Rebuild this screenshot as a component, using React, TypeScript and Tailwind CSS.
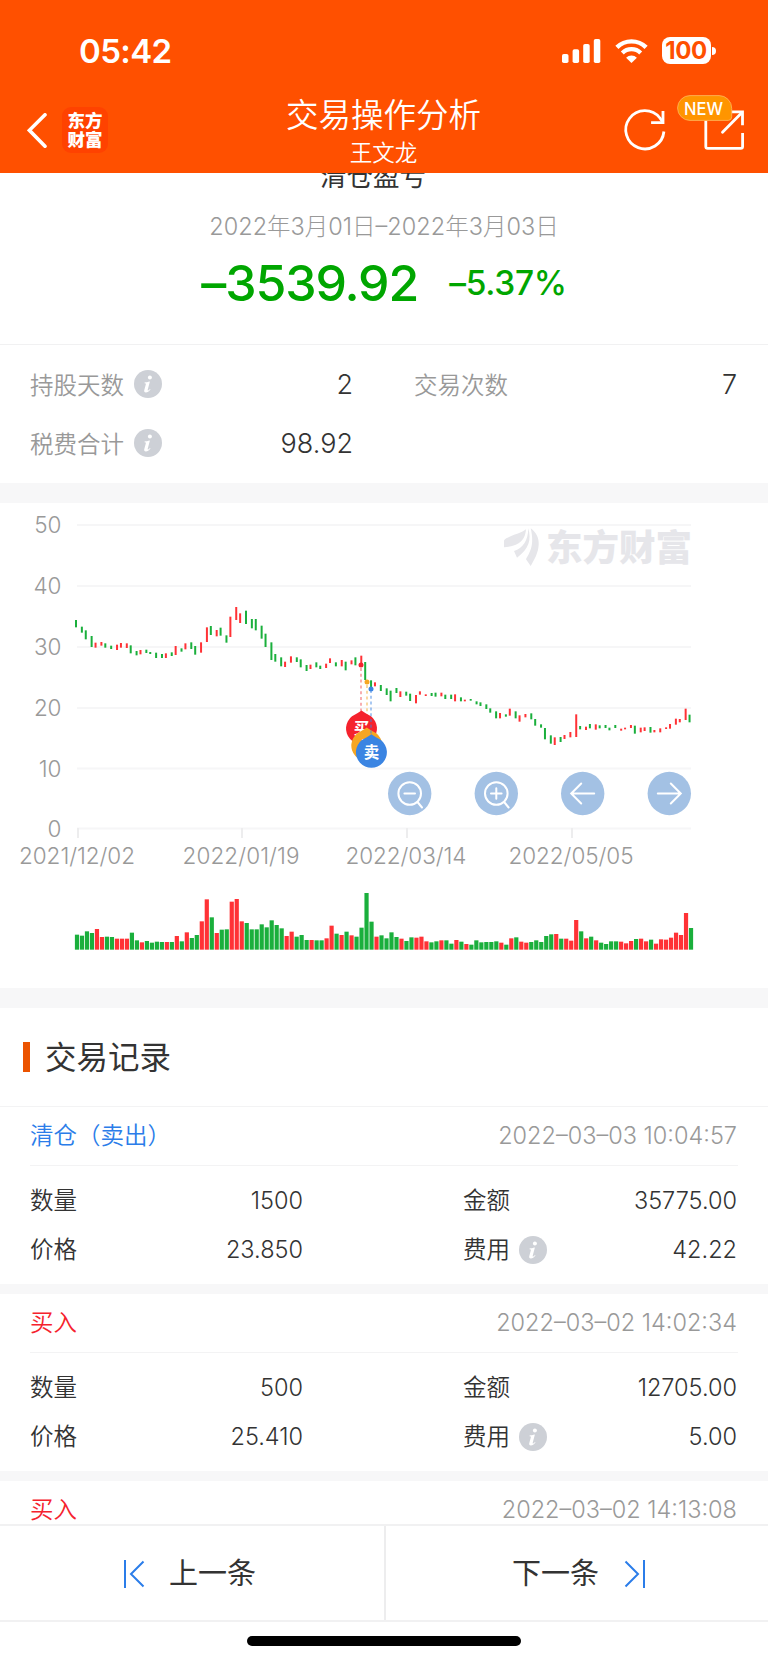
import clsx from "clsx";
import type { PropsWithChildren } from "react";
import React from "react";

type Kind = "r" | "g" | "x";

// [high, low, volume top, kind], in thirds of a pixel inside the chart.
// "x" closed up while its volume bar is drawn as a falling day.
const days: [number, number, number, Kind][] = [
  [360, 382, 194, "g"], [380, 398, 197, "g"], [391, 418, 184, "g"], [408, 441, 189, "g"],
  [428, 443, 177, "r"], [426, 437, 201, "r"], [430, 443, 200, "g"], [437, 447, 201, "g"],
  [434, 450, 206, "r"], [429, 443, 206, "r"], [430, 444, 206, "r"], [436, 460, 188, "g"],
  [453, 466, 211, "g"], [450, 463, 217, "r"], [449, 459, 213, "g"], [456, 462, 218, "g"],
  [458, 474, 215, "g"], [462, 474, 216, "g"], [460, 474, 216, "r"], [457, 468, 216, "g"],
  [438, 465, 198, "r"], [445, 455, 214, "g"], [430, 448, 187, "r"], [427, 447, 204, "g"],
  [438, 464, 195, "g"], [427, 458, 154, "r"], [382, 426, 88, "r"], [378, 405, 142, "g"],
  [390, 409, 189, "r"], [383, 407, 179, "g"], [406, 428, 178, "g"], [350, 411, 95, "r"],
  [321, 360, 87, "r"], [340, 369, 154, "r"], [332, 372, 159, "g"], [357, 385, 178, "g"],
  [357, 391, 178, "g"], [377, 416, 163, "g"], [401, 441, 172, "g"], [427, 480, 151, "g"],
  [462, 485, 165, "g"], [472, 499, 175, "g"], [485, 501, 198, "r"], [469, 488, 185, "r"],
  [472, 486, 200, "g"], [478, 502, 195, "g"], [495, 513, 210, "g"], [494, 507, 210, "r"],
  [487, 502, 211, "g"], [497, 507, 211, "g"], [491, 504, 205, "r"], [475, 489, 167, "r"],
  [487, 499, 191, "g"], [480, 499, 195, "r"], [485, 511, 185, "g"], [481, 493, 196, "r"],
  [472, 496, 200, "g"], [467, 497, 173, "x"], [486, 540, 69, "g"], [541, 567, 155, "g"],
  [547, 559, 200, "r"], [555, 573, 196, "g"], [565, 585, 205, "g"], [572, 604, 187, "g"],
  [564, 579, 201, "g"], [574, 591, 206, "r"], [575, 587, 213, "g"], [581, 603, 202, "g"],
  [585, 610, 203, "r"], [574, 584, 200, "r"], [583, 588, 214, "r"], [579, 588, 217, "g"],
  [578, 590, 214, "g"], [578, 589, 211, "r"], [584, 597, 211, "g"], [584, 597, 221, "g"],
  [583, 604, 210, "r"], [592, 604, 215, "g"], [599, 604, 222, "r"], [597, 602, 224, "g"],
  [604, 613, 211, "g"], [607, 618, 217, "g"], [613, 627, 216, "g"], [625, 638, 216, "g"],
  [634, 655, 214, "g"], [639, 655, 218, "r"], [643, 650, 224, "g"], [626, 647, 205, "r"],
  [634, 655, 202, "g"], [646, 665, 215, "r"], [642, 652, 218, "r"], [640, 658, 216, "g"],
  [657, 677, 211, "g"], [673, 683, 216, "g"], [684, 718, 198, "g"], [706, 731, 193, "g"],
  [712, 735, 192, "r"], [711, 726, 206, "g"], [705, 717, 206, "r"], [696, 712, 212, "r"],
  [643, 711, 150, "r"], [678, 688, 184, "g"], [680, 690, 205, "r"], [672, 685, 200, "g"],
  [673, 689, 211, "r"], [676, 685, 218, "g"], [675, 684, 222, "g"], [683, 691, 214, "g"],
  [675, 684, 214, "g"], [686, 692, 215, "r"], [683, 688, 220, "r"], [675, 684, 213, "r"],
  [677, 701, 207, "g"], [683, 697, 206, "r"], [682, 693, 214, "r"], [681, 698, 209, "g"],
  [690, 697, 221, "r"], [685, 697, 208, "r"], [682, 687, 209, "r"], [672, 686, 203, "r"],
  [656, 674, 188, "r"], [657, 667, 195, "r"], [626, 660, 129, "r"], [644, 667, 174, "g"],
];

const axisRows = [
  { label: "50", y: 22 },
  { label: "40", y: 83 },
  { label: "30", y: 144 },
  { label: "20", y: 205 },
  { label: "10", y: 265.5 },
  { label: "0", y: 325.5 },
];

const axisDates = [
  { label: "2021/12/02", x: 78, width: 116 },
  { label: "2022/01/19", x: 242, width: 117 },
  { label: "2022/03/14", x: 407, width: 121 },
  { label: "2022/05/05", x: 572, width: 125 },
];

const records = [
  {
    title: "清仓（卖出）",
    color: "text-[#2b7de9]",
    time: "2022–03–03 10:04:57",
    quantity: "1500",
    amount: "35775.00",
    price: "23.850",
    fee: "42.22",
  },
  {
    title: "买入",
    color: "text-[#f5222d]",
    time: "2022–03–02 14:02:34",
    quantity: "500",
    amount: "12705.00",
    price: "25.410",
    fee: "5.00",
  },
  {
    title: "买入",
    color: "text-[#f5222d]",
    time: "2022–03–02 14:13:08",
    quantity: "500",
    amount: "12850.00",
    price: "25.700",
    fee: "5.00",
  },
];

function InfoIcon({ className }: { className?: string }) {
  return (
    <svg className={clsx("size-7 shrink-0", className)} viewBox="0 0 28 28">
      <circle cx="14" cy="14" r="14" fill="#cdd0d6" />
      <circle cx="15.9" cy="7.6" r="2" fill="#fff" />
      <path
        d="M10.6 12.4c1.700 0 3.100-.4 5.300-.9l-2.200 8.300c-.2.9.4.9 2.300-.9l.5.5c-1.600 2-3 3-4.600 3-1.500 0-2-1-1.600-2.500l1.500-5.500c.2-.9-.2-1.100-1.400-1.200z"
        fill="#fff"
      />
    </svg>
  );
}

function StatusBar() {
  return (
    <div className="flex h-[88px] items-start justify-between pl-[79px] pr-[52px] pt-[31px]">
      <span className="text-[33px] font-semibold leading-[40px] tracking-[-0.6px]">05:42</span>
      <div className="flex pt-[6px]">
        <svg className="mr-[14px] mt-[2px] h-[24px] w-[39px]" viewBox="0 0 39 24" fill="#fff">
          <rect x="0" y="15" width="6.500" height="9" rx="1.800" />
          <rect x="10.600" y="10.300" width="6.500" height="13.700" rx="1.800" />
          <rect x="21.200" y="5" width="6.500" height="19" rx="1.800" />
          <rect x="31.800" y="0" width="6.500" height="24" rx="1.800" />
        </svg>
        <svg className="mr-[14px] mt-[2px] h-[24px] w-[33px]" viewBox="0 0 33 24" fill="none" stroke="#fff">
          <path d="M1.900 8.400a20.800 20.800 0 0 1 29.200 0" strokeWidth="4.400" />
          <path d="M7.300 14a13 13 0 0 1 18.400 0" strokeWidth="4.200" />
          <path d="M16.500 24l-5.400-5.300a7.700 7.700 0 0 1 10.800 0z" fill="#fff" stroke="none" />
        </svg>
        <div className="flex h-[27px] w-[49px] items-center justify-center rounded-[8px] bg-white text-[24px] font-bold leading-none tracking-[-0.4px] text-[#ff5000]">
          100
        </div>
        <div className="ml-[1.500px] mt-[10px] h-[8px] w-[4px] rounded-r-full bg-white" />
      </div>
    </div>
  );
}

function NavBar() {
  return (
    <div className="flex h-[85px] justify-between pl-[27px] pr-[24px]">
      <div className="flex w-[226px] items-start pt-[19px]">
        <svg className="mt-[6px] h-[36px] w-[21px]" viewBox="0 0 21 36" fill="none" stroke="#fff" strokeWidth="3.600">
          <path d="M18 1.800L2.400 17.300 18 33.200" strokeLinecap="round" />
        </svg>
        <div className="ml-[14px] flex size-[46px] flex-col items-center justify-center rounded-[9px] bg-[#ff4200] text-[17.500px] font-black leading-[19px]">
          <span>东方</span>
          <span>财富</span>
        </div>
      </div>
      <div className="-ml-[4px] flex flex-col items-center pt-[8px] font-[350]">
        <h1 className="text-[32.500px] leading-[40px]">交易操作分析</h1>
        <p className="text-[22.500px] leading-[34px]">王文龙</p>
      </div>
      <div className="flex w-[226px] justify-end">
        <svg className="h-[72px] w-[124px]" viewBox="620 88 124 72" fill="none" stroke="#fff" strokeWidth="2.800">
          <path d="M663.900 131.500a19.100 19.100 0 1 1-4-13.500l3.100 4.500" />
          <path d="M663 111v11.600h-11.900" />
          <path d="M705.800 118v28.500q0 1.900 1.900 1.900h33q1.900 0 1.900-1.900V133" />
          <path d="M729 111.800h13.500v13.400" />
          <path d="M741.500 113L722.500 132.300" strokeLinecap="round" />
          <path
            d="M690 95.600h29a12.700 12.700 0 0 1 12.700 12.700v8.500q0 3.600-3.600 3.600H690a12.400 12.400 0 0 1 0-24.800z"
            fill="#ff9500"
            stroke="#ffab4d"
            strokeWidth="1"
          />
          <text x="703.500" y="114.600" fill="#fff" stroke="none" fontSize="17.500" fontWeight="500" textAnchor="middle" textLength="39" lengthAdjust="spacingAndGlyphs">
            NEW
          </text>
        </svg>
      </div>
    </div>
  );
}

function Summary() {
  return (
    <section>
      <div className="flex h-[172px] flex-col items-center border-b-[1.500px] border-[#f1f1f2]">
        <h2 className="-mt-[11px] mr-[22px] h-[28px] text-[26.500px] leading-[28px]">清仓盈亏</h2>
        <p className="mt-[20px] text-[23.500px] font-light leading-[34px] text-[#999]">
          2022年3月01日–2022年3月03日
        </p>
        <div className="mt-[14px] flex items-center font-medium text-[#00a600]">
          <span className="text-[50px] leading-[50px] tracking-[-1.100px]">–3539.92</span>
          <span className="ml-[31px] text-[33.500px] leading-[50px] tracking-[-0.300px]">–5.37%</span>
        </div>
      </div>
      <div className="grid h-[138px] grid-cols-2 content-start pt-[11px] text-[23.500px] font-[350] text-[#999]">
        <div className="flex h-[59px] items-center pl-[30px] pr-[31px]">
          持股天数
          <InfoIcon className="mb-1 ml-[10px]" />
          <span className="ml-auto text-[27px] text-[#333]">2</span>
        </div>
        <div className="flex h-[59px] items-center pl-[30px] pr-[31px]">
          交易次数
          <span className="ml-auto text-[27px] text-[#333]">7</span>
        </div>
        <div className="flex h-[59px] items-center pl-[30px] pr-[31px]">
          税费合计
          <InfoIcon className="mb-1 ml-[10px]" />
          <span className="ml-auto text-[27px] text-[#333]">98.92</span>
        </div>
      </div>
    </section>
  );
}

function Pin({ x, y, color, label }: { x: number; y: number; color: string; label: string }) {
  return (
    <g transform={`translate(${x} ${y})`}>
      <path d="M0-18c2 1.500 6 3.600 9.500 5.800A15.500 15.500 0 1 1-9.500-12.200C-6-14.400-2-16.500 0-18z" fill={color} />
      <text y="5.500" fill="#fff" fontSize="15.500" fontWeight="700" textAnchor="middle">
        {label}
      </text>
    </g>
  );
}

function ChartButton({ x, children }: PropsWithChildren<{ x: number }>) {
  return (
    <g transform={`translate(${x} 290.500)`} fill="none" stroke="#fff" strokeWidth="2" strokeLinecap="round">
      <circle r="21.700" fill="#a3c1e4" stroke="none" />
      {children}
    </g>
  );
}

function PriceChart() {
  return (
    <svg className="block h-[485px] w-full" viewBox="0 0 768 485">
      {axisRows.map((row) => (
        <g key={row.label}>
          <rect x="77" y={row.y - 1} width="614" height="2" fill="#f6f6f7" />
          <text x="61" y={row.y + 8.300} fill="#999" fontSize="22.500" fontWeight="300" textAnchor="end" letterSpacing="-0.3">
            {row.label}
          </text>
        </g>
      ))}
      {axisDates.map((date) => (
        <g key={date.label}>
          <rect x={date.x - 1} y="325" width="2" height="10" fill="#ededee" />
          <text
            x={date.x - date.width / 2 - 1}
            y="360.500"
            fill="#999"
            fontSize="22.500"
            fontWeight="300"
            textLength={date.width}
          >
            {date.label}
          </text>
        </g>
      ))}

      {/* watermark */}
      <g fill="#e6e6ea">
        <path d="M526 26.300C520 31 507 33 504 37.500L504 44.300C514 43.500 525 41 526 26.300z" />
        <path d="M528.300 25.300C531.500 37 529 46 517 54.700L514 48C523 45 528 38 528.300 25.300z" />
        <path d="M530.700 25.300C536 29 539 35 538.700 41C538.500 50 534 57 530.700 63L526 56.300C529 50 535 44 530.700 25.300z" />
        <text x="546" y="58" fontSize="36.500" fontWeight="900" textLength="146">
          东方财富
        </text>
      </g>

      {days.map(([high, low, volume, kind], i) => (
        <g key={i}>
          <rect
            x={75 + Math.floor(i * 2.555 + 0.6) * 1.954}
            y={high / 3 - 3}
            width="2"
            height={(low - high) / 3}
            fill={kind === "g" ? "#1aaf3c" : "#ff3236"}
          />
          <rect
            x={74.900 + i * 4.992}
            y={367 + volume / 3}
            width="4.200"
            height={(239 - volume) / 3}
            fill={kind === "r" ? "#ff3236" : "#1aaf3c"}
          />
        </g>
      ))}

      <g strokeWidth="1.600" strokeDasharray="3 2.800">
        <path d="M361 165v45" stroke="#f79a9d" />
        <path d="M367 182v45" stroke="#f8d08c" />
      </g>
      <circle cx="361" cy="162" r="2.500" fill="#f5222d" />
      <circle cx="367" cy="179" r="2.500" fill="#f6a623" />
      <circle cx="371" cy="186" r="2.500" fill="#3a84e2" />
      <Pin x={361.500} y={225.500} color="#f5222d" label="买" />
      <Pin x={366.800} y={242.500} color="#f6a623" label="T" />
      <path d="M371 187v45" stroke="#3a84e2" strokeOpacity="0.550" strokeWidth="1.600" strokeDasharray="3 2.800" />
      <Pin x={371.400} y={249.300} color="#3a84e2" label="卖" />

      <ChartButton x={409.700}>
        <circle r="11.300" />
        <path d="M-5.300 0h10.600M7.800 8.500l4.500 5.500" />
      </ChartButton>
      <ChartButton x={496.300}>
        <circle r="11.300" />
        <path d="M-5.300 0h10.600M0-5.300v10.600M7.800 8.500l4.500 5.500" />
      </ChartButton>
      <ChartButton x={582.700}>
        <path d="M11.500 0h-23M-1.500-10l-10 10 10 10" />
      </ChartButton>
      <ChartButton x={669.300}>
        <path d="M-11.500 0h23M1.500-10l10 10-10 10" />
      </ChartButton>
    </svg>
  );
}

function RecordCard({ record }: { record: (typeof records)[number] }) {
  return (
    <article className="h-[187px] border-b-[10px] border-[#f7f7f8] px-[30px] text-[23.500px] font-[350] text-[#333]">
      <div className="flex h-[59px] items-center justify-between border-b-[1.500px] border-[#f3f3f4] pr-px">
        <span className={record.color}>{record.title}</span>
        <span className="font-light text-[#999]">{record.time}</span>
      </div>
      <div className="grid grid-cols-[273px_274px] justify-between pr-px pt-[10px]">
        <div className="flex h-[49px] items-center justify-between">
          数量 <span>{record.quantity}</span>
        </div>
        <div className="flex h-[49px] items-center justify-between">
          金额 <span>{record.amount}</span>
        </div>
        <div className="flex h-[49px] items-center justify-between">
          价格 <span>{record.price}</span>
        </div>
        <div className="flex h-[49px] items-center">
          费用
          <InfoIcon className="ml-[9px]" />
          <span className="ml-auto">{record.fee}</span>
        </div>
      </div>
    </article>
  );
}

function FooterNav() {
  return (
    <footer className="h-[139px] shrink-0 bg-white">
      <div className="flex h-[98px] border-y-2 border-[#f1f1f2] text-[29px] text-[#333]">
        <button className="flex flex-1 items-center border-r-2 border-[#ededee] pl-[123px] pt-[2px]">
          <svg className="mr-[24px] h-[28px] w-[22px]" viewBox="0 0 22 28" fill="none" stroke="#2b7de9" strokeWidth="2">
            <path d="M2 0v28M20.500 1.500L8 14l12.500 12.500" />
          </svg>
          上一条
        </button>
        <button className="flex flex-1 items-center justify-end pr-[122px] pt-[2px]">
          下一条
          <svg className="ml-[25px] h-[28px] w-[22px]" viewBox="0 0 22 28" fill="none" stroke="#2b7de9" strokeWidth="2">
            <path d="M20 0v28M1.500 1.500L14 14 1.500 26.500" />
          </svg>
        </button>
      </div>
      <div className="mx-auto mt-[14px] h-[10px] w-[274px] rounded-full bg-black" />
    </footer>
  );
}

export default function App() {
  return (
    <div className="flex h-[1663px] w-[768px] flex-col overflow-hidden bg-white font-['Inter','Noto_Sans_CJK_SC',sans-serif] text-[#333]">
      <header className="h-[173px] shrink-0 bg-[#ff5000] text-white">
        <StatusBar />
        <NavBar />
      </header>
      <main className="min-h-0 flex-1 overflow-hidden">
        <Summary />
        <div className="h-[20px] bg-[#f7f7f8]" />
        <PriceChart />
        <div className="h-[20px] bg-[#f7f7f8]" />
        <section>
          <div className="flex h-[99px] items-center border-b-[1.500px] border-[#f3f3f4] pl-[23px]">
            <span className="h-[30px] w-[7px] bg-[#eb5300]" />
            <h2 className="ml-[15px] pt-[2px] text-[31.500px]">交易记录</h2>
          </div>
          {records.map((record) => (
            <RecordCard key={record.time} record={record} />
          ))}
        </section>
      </main>
      <FooterNav />
    </div>
  );
}
